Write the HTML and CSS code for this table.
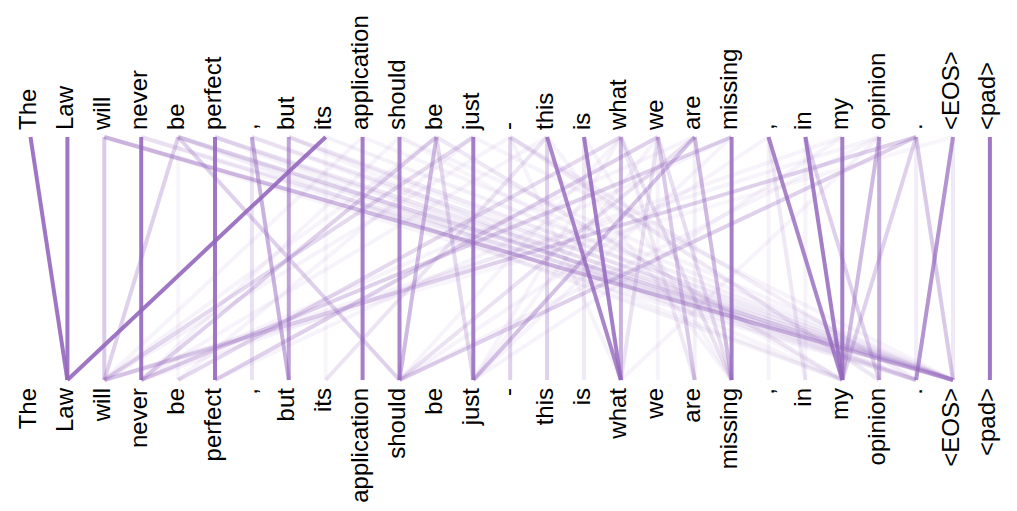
FILE: index.html
```html
<!DOCTYPE html>
<html>
<head>
<meta charset="utf-8">
<link rel="stylesheet" href="styles.css">
</head>
<body>
<div class="figure">
<svg class="chart" width="1017" height="511" viewBox="0 0 1017 511" xmlns="http://www.w3.org/2000/svg">
  <g class="links">
    <!-- faint texture -->
    <line x1="104.3" y1="137" x2="916.1" y2="380" stroke-opacity="0.08"/>
    <line x1="141.2" y1="137" x2="916.1" y2="380" stroke-opacity="0.08"/>
    <line x1="178.1" y1="137" x2="916.1" y2="380" stroke-opacity="0.1"/>
    <line x1="251.9" y1="137" x2="916.1" y2="380" stroke-opacity="0.08"/>
    <line x1="288.8" y1="137" x2="916.1" y2="380" stroke-opacity="0.08"/>
    <line x1="362.6" y1="137" x2="953.0" y2="380" stroke-opacity="0.08"/>
    <line x1="399.5" y1="137" x2="953.0" y2="380" stroke-opacity="0.08"/>
    <line x1="399.5" y1="137" x2="842.3" y2="380" stroke-opacity="0.06"/>
    <line x1="473.3" y1="137" x2="953.0" y2="380" stroke-opacity="0.08"/>
    <line x1="215.0" y1="137" x2="842.3" y2="380" stroke-opacity="0.07"/>
    <line x1="510.2" y1="137" x2="620.9" y2="380" stroke-opacity="0.08"/>
    <line x1="547.1" y1="137" x2="731.6" y2="380" stroke-opacity="0.08"/>
    <line x1="584.0" y1="137" x2="731.6" y2="380" stroke-opacity="0.08"/>
    <line x1="620.9" y1="137" x2="473.3" y2="380" stroke-opacity="0.08"/>
    <line x1="731.6" y1="137" x2="473.3" y2="380" stroke-opacity="0.08"/>
    <line x1="768.5" y1="137" x2="768.5" y2="380" stroke-opacity="0.08"/>
    <line x1="805.4" y1="137" x2="805.4" y2="380" stroke-opacity="0.08"/>
    <line x1="842.3" y1="137" x2="141.2" y2="380" stroke-opacity="0.08"/>
    <line x1="879.2" y1="137" x2="399.5" y2="380" stroke-opacity="0.08"/>
    <line x1="879.2" y1="137" x2="104.3" y2="380" stroke-opacity="0.08"/>
    <line x1="694.7" y1="137" x2="141.2" y2="380" stroke-opacity="0.08"/>
    <line x1="731.6" y1="137" x2="215.0" y2="380" stroke-opacity="0.08"/>
    <line x1="473.3" y1="137" x2="178.1" y2="380" stroke-opacity="0.08"/>
    <line x1="436.4" y1="137" x2="104.3" y2="380" stroke-opacity="0.08"/>
    <line x1="399.5" y1="137" x2="141.2" y2="380" stroke-opacity="0.08"/>
    <line x1="362.6" y1="137" x2="104.3" y2="380" stroke-opacity="0.08"/>
    <line x1="657.8" y1="137" x2="473.3" y2="380" stroke-opacity="0.08"/>
    <line x1="620.9" y1="137" x2="399.5" y2="380" stroke-opacity="0.08"/>
    <line x1="510.2" y1="137" x2="104.3" y2="380" stroke-opacity="0.08"/>
    <line x1="547.1" y1="137" x2="141.2" y2="380" stroke-opacity="0.08"/>
    <line x1="768.5" y1="137" x2="399.5" y2="380" stroke-opacity="0.08"/>
    <line x1="953.0" y1="137" x2="104.3" y2="380" stroke-opacity="0.06"/>
    <line x1="842.3" y1="137" x2="473.3" y2="380" stroke-opacity="0.08"/>
    <line x1="879.2" y1="137" x2="620.9" y2="380" stroke-opacity="0.08"/>
    <line x1="178.1" y1="137" x2="178.1" y2="380" stroke-opacity="0.06"/>
    <line x1="325.7" y1="137" x2="325.7" y2="380" stroke-opacity="0.06"/>
    <line x1="657.8" y1="137" x2="657.8" y2="380" stroke-opacity="0.08"/>
    <line x1="694.7" y1="137" x2="694.7" y2="380" stroke-opacity="0.1"/>
    <line x1="325.7" y1="137" x2="953.0" y2="380" stroke-opacity="0.1"/>
    <line x1="288.8" y1="137" x2="842.3" y2="380" stroke-opacity="0.07"/>
    <line x1="141.2" y1="137" x2="953.0" y2="380" stroke-opacity="0.14"/>
    <line x1="215.0" y1="137" x2="953.0" y2="380" stroke-opacity="0.16"/>
    <line x1="215.0" y1="137" x2="916.1" y2="380" stroke-opacity="0.12"/>
    <line x1="251.9" y1="137" x2="953.0" y2="380" stroke-opacity="0.14"/>
    <line x1="288.8" y1="137" x2="953.0" y2="380" stroke-opacity="0.14"/>
    <line x1="178.1" y1="137" x2="842.3" y2="380" stroke-opacity="0.1"/>
    <line x1="547.1" y1="137" x2="325.7" y2="380" stroke-opacity="0.18"/>
    <line x1="510.2" y1="137" x2="916.1" y2="380" stroke-opacity="0.12"/>
    <line x1="620.9" y1="137" x2="694.7" y2="380" stroke-opacity="0.15"/>
    <line x1="510.2" y1="137" x2="879.2" y2="380" stroke-opacity="0.15"/>
    <line x1="584.0" y1="137" x2="584.0" y2="380" stroke-opacity="0.15"/>
    <line x1="768.5" y1="137" x2="805.4" y2="380" stroke-opacity="0.15"/>
    <line x1="916.1" y1="137" x2="916.1" y2="380" stroke-opacity="0.12"/>
    <line x1="953.0" y1="137" x2="953.0" y2="380" stroke-opacity="0.15"/>
    <line x1="251.9" y1="137" x2="251.9" y2="380" stroke-opacity="0.2"/>
    <line x1="620.9" y1="137" x2="731.6" y2="380" stroke-opacity="0.2"/>
    <line x1="657.8" y1="137" x2="620.9" y2="380" stroke-opacity="0.2"/>
    <line x1="694.7" y1="137" x2="399.5" y2="380" stroke-opacity="0.2"/>
    <line x1="436.4" y1="137" x2="842.3" y2="380" stroke-opacity="0.16"/>
    <line x1="657.8" y1="137" x2="731.6" y2="380" stroke-opacity="0.22"/>
    <!-- medium -->
    <line x1="104.3" y1="137" x2="104.3" y2="380" stroke-opacity="0.35"/>
    <line x1="104.3" y1="137" x2="953.0" y2="380" stroke-opacity="0.45"/>
    <line x1="178.1" y1="137" x2="104.3" y2="380" stroke-opacity="0.3"/>
    <line x1="178.1" y1="137" x2="399.5" y2="380" stroke-opacity="0.3"/>
    <line x1="178.1" y1="137" x2="953.0" y2="380" stroke-opacity="0.28"/>
    <line x1="251.9" y1="137" x2="288.8" y2="380" stroke-opacity="0.5"/>
    <line x1="288.8" y1="137" x2="288.8" y2="380" stroke-opacity="0.6"/>
    <line x1="436.4" y1="137" x2="399.5" y2="380" stroke-opacity="0.45"/>
    <line x1="436.4" y1="137" x2="141.2" y2="380" stroke-opacity="0.3"/>
    <line x1="436.4" y1="137" x2="473.3" y2="380" stroke-opacity="0.25"/>
    <line x1="473.3" y1="137" x2="104.3" y2="380" stroke-opacity="0.25"/>
    <line x1="510.2" y1="137" x2="510.2" y2="380" stroke-opacity="0.3"/>
    <line x1="547.1" y1="137" x2="547.1" y2="380" stroke-opacity="0.3"/>
    <line x1="620.9" y1="137" x2="620.9" y2="380" stroke-opacity="0.5"/>
    <line x1="620.9" y1="137" x2="178.1" y2="380" stroke-opacity="0.25"/>
    <line x1="657.8" y1="137" x2="694.7" y2="380" stroke-opacity="0.35"/>
    <line x1="657.8" y1="137" x2="215.0" y2="380" stroke-opacity="0.3"/>
    <line x1="694.7" y1="137" x2="473.3" y2="380" stroke-opacity="0.4"/>
    <line x1="694.7" y1="137" x2="731.6" y2="380" stroke-opacity="0.45"/>
    <line x1="731.6" y1="137" x2="141.2" y2="380" stroke-opacity="0.3"/>
    <line x1="805.4" y1="137" x2="879.2" y2="380" stroke-opacity="0.3"/>
    <line x1="879.2" y1="137" x2="879.2" y2="380" stroke-opacity="0.55"/>
    <line x1="879.2" y1="137" x2="842.3" y2="380" stroke-opacity="0.45"/>
    <line x1="916.1" y1="137" x2="842.3" y2="380" stroke-opacity="0.3"/>
    <line x1="916.1" y1="137" x2="953.0" y2="380" stroke-opacity="0.35"/>
    <line x1="916.1" y1="137" x2="104.3" y2="380" stroke-opacity="0.3"/>
    <line x1="916.1" y1="137" x2="399.5" y2="380" stroke-opacity="0.3"/>
    <line x1="953.0" y1="137" x2="916.1" y2="380" stroke-opacity="0.7"/>
    <!-- strong -->
    <line x1="30.5" y1="137" x2="67.4" y2="380" stroke-opacity="0.9"/>
    <line x1="67.4" y1="137" x2="67.4" y2="380" stroke-opacity="0.9"/>
    <line x1="141.2" y1="137" x2="141.2" y2="380" stroke-opacity="0.9"/>
    <line x1="215.0" y1="137" x2="215.0" y2="380" stroke-opacity="0.9"/>
    <line x1="325.7" y1="137" x2="67.4" y2="380" stroke-opacity="0.9"/>
    <line x1="362.6" y1="137" x2="362.6" y2="380" stroke-opacity="0.85"/>
    <line x1="399.5" y1="137" x2="399.5" y2="380" stroke-opacity="0.8"/>
    <line x1="473.3" y1="137" x2="473.3" y2="380" stroke-opacity="0.85"/>
    <line x1="547.1" y1="137" x2="620.9" y2="380" stroke-opacity="0.8"/>
    <line x1="584.0" y1="137" x2="620.9" y2="380" stroke-opacity="0.85"/>
    <line x1="731.6" y1="137" x2="731.6" y2="380" stroke-opacity="0.85"/>
    <line x1="768.5" y1="137" x2="842.3" y2="380" stroke-opacity="0.8"/>
    <line x1="805.4" y1="137" x2="842.3" y2="380" stroke-opacity="0.85"/>
    <line x1="842.3" y1="137" x2="842.3" y2="380" stroke-opacity="0.85"/>
    <line x1="989.9" y1="137" x2="989.9" y2="380" stroke-opacity="0.9"/>
  </g>
  <g class="labels top">
    <text transform="translate(36,130) rotate(-90)">The</text>
    <text transform="translate(72.9,130) rotate(-90)">Law</text>
    <text transform="translate(109.8,130) rotate(-90)">will</text>
    <text transform="translate(146.7,130) rotate(-90)">never</text>
    <text transform="translate(183.6,130) rotate(-90)">be</text>
    <text transform="translate(220.5,130) rotate(-90)">perfect</text>
    <text transform="translate(257.4,130) rotate(-90)">,</text>
    <text transform="translate(294.3,130) rotate(-90)">but</text>
    <text transform="translate(331.2,130) rotate(-90)">its</text>
    <text transform="translate(368.1,130) rotate(-90)">application</text>
    <text transform="translate(405,130) rotate(-90)">should</text>
    <text transform="translate(441.9,130) rotate(-90)">be</text>
    <text transform="translate(478.8,130) rotate(-90)">just</text>
    <text transform="translate(515.7,130) rotate(-90)">-</text>
    <text transform="translate(552.6,130) rotate(-90)">this</text>
    <text transform="translate(589.5,130) rotate(-90)">is</text>
    <text transform="translate(626.4,130) rotate(-90)">what</text>
    <text transform="translate(663.3,130) rotate(-90)">we</text>
    <text transform="translate(700.2,130) rotate(-90)">are</text>
    <text transform="translate(737.1,130) rotate(-90)">missing</text>
    <text transform="translate(774,130) rotate(-90)">,</text>
    <text transform="translate(810.9,130) rotate(-90)">in</text>
    <text transform="translate(847.8,130) rotate(-90)">my</text>
    <text transform="translate(884.7,130) rotate(-90)">opinion</text>
    <text transform="translate(921.6,130) rotate(-90)">.</text>
    <text transform="translate(958.5,130) rotate(-90)">&lt;EOS&gt;</text>
    <text transform="translate(995.4,130) rotate(-90)">&lt;pad&gt;</text>
  </g>
  <g class="labels bottom">
    <text transform="translate(36,388) rotate(-90)">The</text>
    <text transform="translate(72.9,388) rotate(-90)">Law</text>
    <text transform="translate(109.8,388) rotate(-90)">will</text>
    <text transform="translate(146.7,388) rotate(-90)">never</text>
    <text transform="translate(183.6,388) rotate(-90)">be</text>
    <text transform="translate(220.5,388) rotate(-90)">perfect</text>
    <text transform="translate(257.4,388) rotate(-90)">,</text>
    <text transform="translate(294.3,388) rotate(-90)">but</text>
    <text transform="translate(331.2,388) rotate(-90)">its</text>
    <text transform="translate(368.1,388) rotate(-90)">application</text>
    <text transform="translate(405,388) rotate(-90)">should</text>
    <text transform="translate(441.9,388) rotate(-90)">be</text>
    <text transform="translate(478.8,388) rotate(-90)">just</text>
    <text transform="translate(515.7,388) rotate(-90)">-</text>
    <text transform="translate(552.6,388) rotate(-90)">this</text>
    <text transform="translate(589.5,388) rotate(-90)">is</text>
    <text transform="translate(626.4,388) rotate(-90)">what</text>
    <text transform="translate(663.3,388) rotate(-90)">we</text>
    <text transform="translate(700.2,388) rotate(-90)">are</text>
    <text transform="translate(737.1,388) rotate(-90)">missing</text>
    <text transform="translate(774,388) rotate(-90)">,</text>
    <text transform="translate(810.9,388) rotate(-90)">in</text>
    <text transform="translate(847.8,388) rotate(-90)">my</text>
    <text transform="translate(884.7,388) rotate(-90)">opinion</text>
    <text transform="translate(921.6,388) rotate(-90)">.</text>
    <text transform="translate(958.5,388) rotate(-90)">&lt;EOS&gt;</text>
    <text transform="translate(995.4,388) rotate(-90)">&lt;pad&gt;</text>
  </g>
</svg>
</div>
</body>
</html>
```

FILE: styles.css
```css
html, body {
  margin: 0;
  padding: 0;
  background: #ffffff;
}

.figure {
  width: 1017px;
  height: 511px;
  overflow: hidden;
}

.chart {
  display: block;
}

.links line {
  stroke: #9467bd;
  stroke-width: 4;
  stroke-linecap: butt;
}

.labels text {
  font-family: "Liberation Sans", Arial, sans-serif;
  font-size: 24px;
  fill: #000000;
}

.labels.top text {
  text-anchor: start;
}

.labels.bottom text {
  text-anchor: end;
}
```
